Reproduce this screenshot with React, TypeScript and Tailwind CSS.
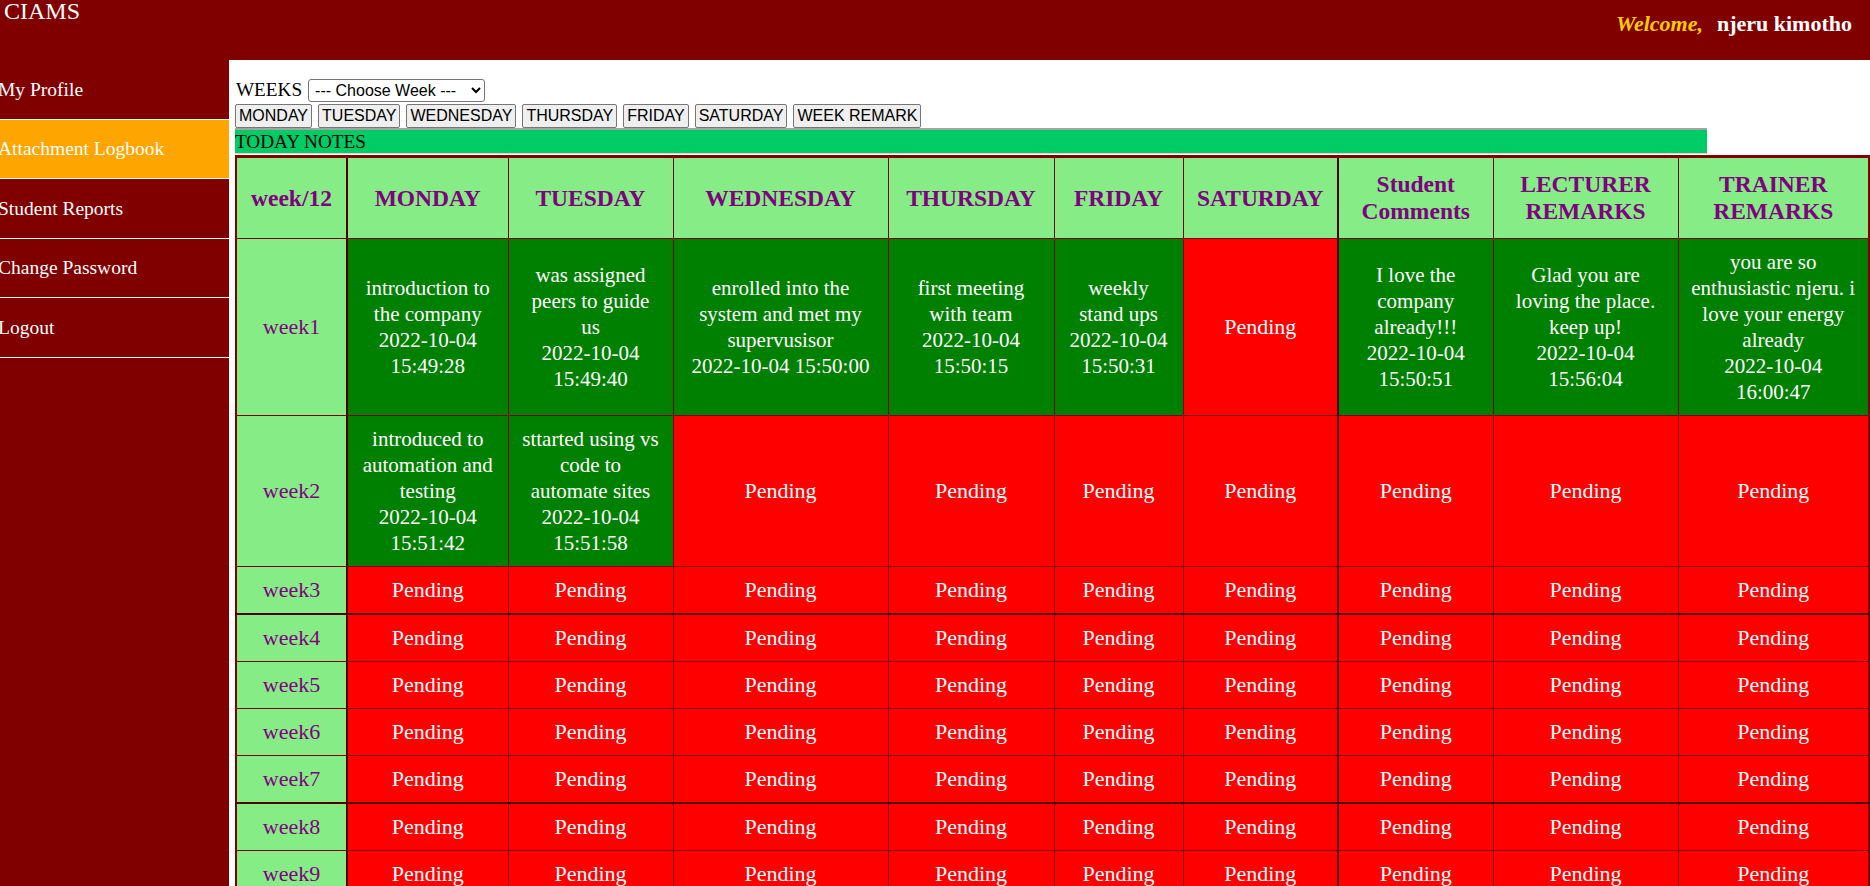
import React from 'react';

type Cell = string[] | null; // null means Pending

const days = ['MONDAY', 'TUESDAY', 'WEDNESDAY', 'THURSDAY', 'FRIDAY', 'SATURDAY', 'WEEK REMARK'];

const headers: string[][] = [
  ['MONDAY'],
  ['TUESDAY'],
  ['WEDNESDAY'],
  ['THURSDAY'],
  ['FRIDAY'],
  ['SATURDAY'],
  ['Student', 'Comments'],
  ['LECTURER', 'REMARKS'],
  ['TRAINER', 'REMARKS'],
];

const colWidths = ['w-[111px]', 'w-[161px]', 'w-[165px]', 'w-[215px]', 'w-[166px]', 'w-[129px]', 'w-[155px]', 'w-[155px]', 'w-[185px]', ''];

const week1: Cell[] = [
  ['introduction to', 'the company', '2022-10-04', '15:49:28'],
  ['was assigned', 'peers to guide', 'us', '2022-10-04', '15:49:40'],
  ['enrolled into the', 'system and met my', 'supervusisor', '2022-10-04 15:50:00'],
  ['first meeting', 'with team', '2022-10-04', '15:50:15'],
  ['weekly', 'stand ups', '2022-10-04', '15:50:31'],
  null,
  ['I love the', 'company', 'already!!!', '2022-10-04', '15:50:51'],
  ['Glad you are', 'loving the place.', 'keep up!', '2022-10-04', '15:56:04'],
  ['you are so', 'enthusiastic njeru. i', 'love your energy', 'already', '2022-10-04', '16:00:47'],
];

const week2: Cell[] = [
  ['introduced to', 'automation and', 'testing', '2022-10-04', '15:51:42'],
  ['sttarted using vs', 'code to', 'automate sites', '2022-10-04', '15:51:58'],
  null, null, null, null, null, null, null,
];

const pendingWeek: Cell[] = [null, null, null, null, null, null, null, null, null];

const weeks: Cell[][] = [week1, week2, ...Array.from({ length: 10 }, () => pendingWeek)];

// rows that show a heavier line under them in the logbook
const heavyRows = [2, 6];

const menu = ['My Profile', 'Attachment Logbook', 'Student Reports', 'Change Password', 'Logout'];

const App: React.FC = () => {
  return (
    <div className="min-h-screen flex flex-col font-['Liberation_Serif',serif] bg-white">
      <header className="h-[60px] bg-[#800000] flex justify-between items-start shrink-0">
        <h1 className="pl-[4px] -mt-[1px] text-[24px] leading-[24px] text-white">CIAMS</h1>
        <div className="pt-[13px] pr-[18px] text-[22px] leading-[22px] font-bold">
          <span className="italic text-[#ffcc00]">Welcome,</span>
          <span className="ml-[14px] text-white">njeru kimotho</span>
        </div>
      </header>

      <div className="flex flex-1">
        <aside className="w-[229px] shrink-0 bg-[#800000]">
          {menu.map((item, i) => (
            <div
              key={item}
              className={`h-[59.5px] border-b border-white flex items-center text-[19.5px] text-white ${
                i === 1 ? 'bg-[#ffa500]' : ''
              }`}
            >
              <span className="-ml-[2px] whitespace-nowrap">{item}</span>
            </div>
          ))}
        </aside>

        <main className="flex-1 min-w-0 pl-[6px] pt-[19px] text-[19.2px] text-black">
          <div className="flex items-center h-[23px]">
            <span className="ml-[1px]">WEEKS</span>
            <select className="ml-[6px] h-[23px] w-[177px] border border-[#767676] rounded-[3px] bg-white px-[2px] text-[16px] font-['Liberation_Sans',sans-serif] text-black">
              <option>--- Choose Week ---</option>
            </select>
          </div>

          <div className="flex gap-[6px] mt-[2px]">
            {days.map((d) => (
              <button
                key={d}
                className="h-[24px] px-[3px] border border-[#767676] rounded-[2px] bg-[#efefef] text-[16px] leading-[20px] font-['Liberation_Sans',sans-serif] text-black"
              >
                {d}
              </button>
            ))}
          </div>

          <div className="w-[90%] border-t-2 border-t-[#a3a3a3] border-b border-b-[#d4d4d4]">
            <div className="h-[23px] bg-[#00cc66] flex items-center text-[19.2px] leading-none">TODAY NOTES</div>
          </div>

          <table className="mt-[1px] w-full table-fixed border-collapse border-x-2 border-t-[3px] border-[#800000]">
            <colgroup>
              {colWidths.map((w, i) => (
                <col key={i} className={w} />
              ))}
            </colgroup>
            <thead>
              <tr className="h-[82px]">
                <th className="border border-[#800000] border-r-2 border-r-[#4f0000] bg-[#86ec86] text-[#800080] text-[23.5px] leading-[27px] font-bold">
                  week/12
                </th>
                {headers.map((h, i) => (
                  <th
                    key={i}
                    className={`border border-[#800000] bg-[#86ec86] text-[#800080] text-[23.5px] leading-[27px] font-bold px-[2px] ${
                      i === 5 ? 'border-r-2 border-r-[#4f0000]' : ''
                    }`}
                  >
                    {h.map((line) => (
                      <div key={line} className="whitespace-nowrap">
                        {line}
                      </div>
                    ))}
                  </th>
                ))}
              </tr>
            </thead>
            <tbody>
              {weeks.map((cells, r) => {
                const heavy = heavyRows.includes(r) ? 'border-b-2 border-b-[#4f0000]' : '';
                return (
                  <tr key={r}>
                    <td
                      className={`border border-[#800000] border-r-2 border-r-[#4f0000] bg-[#86ec86] text-[#800080] text-center text-[22px] leading-[26px] py-[10px] ${heavy}`}
                    >
                      week{r + 1}
                    </td>
                    {cells.map((c, i) => {
                      const sat = i === 5 ? 'border-r-2 border-r-[#4f0000]' : '';
                      if (!c) {
                        return (
                          <td
                            key={i}
                            className={`border border-[#800000] bg-[#ff0000] text-white text-center text-[22px] leading-[26px] py-[10px] ${sat} ${heavy}`}
                          >
                            Pending
                          </td>
                        );
                      }
                      return (
                        <td
                          key={i}
                          className={`border border-[#800000] bg-[#008000] text-white text-center text-[21px] leading-[26px] py-[10px] px-[2px] ${sat} ${heavy}`}
                        >
                          {c.map((line, k) => (
                            <div key={k} className="whitespace-nowrap">
                              {line}
                            </div>
                          ))}
                        </td>
                      );
                    })}
                  </tr>
                );
              })}
            </tbody>
          </table>
        </main>
      </div>
    </div>
  );
};

export default App;
